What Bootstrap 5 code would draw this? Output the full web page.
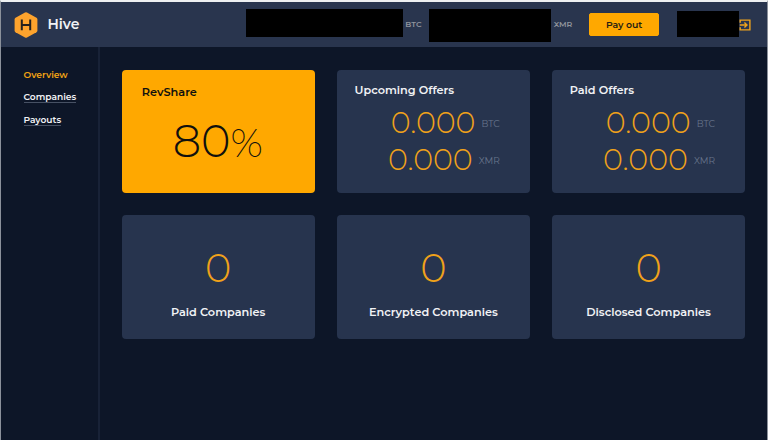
<!DOCTYPE html>
<html lang="en">
<head>
<meta charset="utf-8">
<title>Hive</title>
<link href="https://cdn.jsdelivr.net/npm/bootstrap@5.3.0/dist/css/bootstrap.min.css" rel="stylesheet">
<style>
body{font-family:Montserrat,Inter,"Open Sans",sans-serif;background:#0d1628;color:#f1f2f5;height:440px;font-size:12px;line-height:1;border:1px solid #8b919b;border-top:2px solid #eef0f1;border-bottom:0}
.topbar{height:45px;background:#29354e;padding:0 16px 0 13px}
.brand-name{font-size:14px;font-weight:600;margin:-1px 0 0 9.4px;width:198.2px}
.redact{background:#000;flex:none}
.r1{width:157.4px;height:28px;margin-top:-4px}
.r2{width:122.5px;height:33.5px;margin:2px 0 0 5.7px}
.r3{width:62px;height:25.5px;margin:-1px 0 0 17.5px}
.cur-s{font-size:7.9px;font-weight:600;color:#8f949c;width:20.2px;padding-left:2.4px}
.cur-x{width:37.5px;padding-left:2.4px;font-weight:600}
.payout{--bs-btn-bg:#ffa800;--bs-btn-color:#251d12;--bs-btn-border-color:#ffa800;--bs-btn-border-radius:2px;--bs-btn-padding-y:0;--bs-btn-padding-x:0;width:70.5px;height:23px;font-size:9.3px;font-weight:600;line-height:21px;flex:none}
.side{width:99px;border-right:2px solid #182237;padding:21px 0 0 22.5px;height:393px;flex:none}
.side .nav-link{padding:0;font-size:9.1px;font-weight:600;line-height:13px;margin-bottom:9.4px;color:#f1f2f5;align-self:flex-start}
.side .nav-link span{display:block;border-bottom:1px solid #475164;height:13px}
.side .nav-link.active{color:#f2a313}
.side .nav-link.active span{border-color:transparent}
.tiles{display:grid;grid-template-columns:repeat(3,192.8px);grid-auto-rows:123.5px;gap:22.4px;padding:22.5px 0 0 21.8px}
.tile{background:#27344e;border-radius:4px}
.tile-gold{background:#ffa800;color:#10100e;padding:15.5px 0 0 20px}
.tile-title{font-size:11.3px;font-weight:600;line-height:14px;white-space:nowrap}
.figure-num{font-weight:300;color:#f0a21a}
.rate{padding:20px 0 0 31px;line-height:44px;white-space:nowrap}
.rate .figure-num{color:#10100e}
.rate .big{font-size:44.8px}
.rate .pct{font-size:40px;font-weight:200}
.offers{padding:13.5px 0 0 17.5px}
.offers .tile-title{margin-bottom:7px}
.offer{height:37px;padding-right:30px}
.offer .figure-num{font-size:30.2px;line-height:37px}
.unit{font-size:9.1px;color:#68748c;margin-left:6px;padding-top:3px}
.tally{padding:33px 0 0}
.tally .tile-title{margin-top:17px}
.count{font-size:40px;line-height:40px}
</style>
</head>
<body class="overflow-hidden">
<header class="topbar d-flex align-items-center">
<svg width="24" height="26" viewBox="0 0 24 26" class="flex-shrink-0"><path d="M11 .4Q12 0 13 .4L22.5 5.8Q23.4 6.4 23.4 7.5V18.5Q23.4 19.6 22.5 20.2L13 25.6Q12 26 11 25.6L1.5 20.2Q.6 19.6.6 18.5V7.5Q.6 6.4 1.5 5.8Z" fill="#fda32d"/><path d="M7.8 7.5V18.3M16.2 7.5V18.3M8 12.9H16" stroke="#24201d" stroke-width="2" fill="none"/></svg>
<div class="brand-name">Hive</div>
<div class="redact r1"></div><div class="cur-s">BTC</div>
<div class="redact r2"></div><div class="cur-s cur-x">XMR</div>
<button class="btn payout">Pay out</button>
<div class="redact r3"></div>
<svg width="12" height="12" viewBox="0 0 12 12" fill="none" stroke="#efa31c" stroke-width="1.4" class="ms-auto flex-shrink-0"><path d="M1.2 3.7V1.1H10.9V10.9H1.2V8.3M.8 6H7.8M5.4 3.4L8 6L5.4 8.6"/></svg>
</header>
<div class="d-flex">
<nav class="side nav flex-column flex-nowrap">
<a class="nav-link active"><span>Overview</span></a>
<a class="nav-link"><span>Companies</span></a>
<a class="nav-link"><span>Payouts</span></a>
</nav>
<main class="tiles">
<section class="tile tile-gold"><div class="tile-title">RevShare</div><div class="rate"><span class="figure-num big">80</span><span class="figure-num pct">%</span></div></section>
<section class="tile offers"><div class="tile-title">Upcoming Offers</div>
<div class="offer d-flex justify-content-end align-items-center"><span class="figure-num">0.000</span><span class="unit">BTC</span></div>
<div class="offer d-flex justify-content-end align-items-center"><span class="figure-num">0.000</span><span class="unit">XMR</span></div></section>
<section class="tile offers"><div class="tile-title">Paid Offers</div>
<div class="offer d-flex justify-content-end align-items-center"><span class="figure-num">0.000</span><span class="unit">BTC</span></div>
<div class="offer d-flex justify-content-end align-items-center"><span class="figure-num">0.000</span><span class="unit">XMR</span></div></section>
<section class="tile tally text-center"><div class="figure-num count">0</div><div class="tile-title">Paid Companies</div></section>
<section class="tile tally text-center"><div class="figure-num count">0</div><div class="tile-title">Encrypted Companies</div></section>
<section class="tile tally text-center"><div class="figure-num count">0</div><div class="tile-title">Disclosed Companies</div></section>
</main>
</div>
<script src="https://cdn.jsdelivr.net/npm/bootstrap@5.3.0/dist/js/bootstrap.bundle.min.js"></script>
</body>
</html>
